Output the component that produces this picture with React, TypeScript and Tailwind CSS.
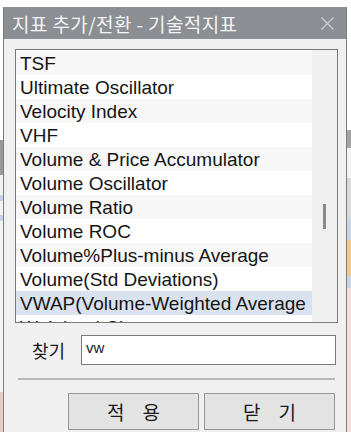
import React from "react";

const items: string[] = [
  "TSF",
  "Ultimate Oscillator",
  "Velocity Index",
  "VHF",
  "Volume & Price Accumulator",
  "Volume Oscillator",
  "Volume Ratio",
  "Volume ROC",
  "Volume%Plus-minus Average",
  "Volume(Std Deviations)",
  "VWAP(Volume-Weighted Average",
  "Weighted Close",
];

const SELECTED = 10;

const latin = { fontFamily: '"Liberation Sans", "Noto Sans CJK KR", sans-serif' };
const hangul = { fontFamily: '"Noto Sans CJK KR", "Liberation Sans", sans-serif' };

const App: React.FC = () => {
  return (
    <div className="flex h-[432px] w-[351px] overflow-hidden bg-white">
      {/* app behind the dialog, left edge */}
      <div className="flex w-[3px] flex-col">
        <div className="h-[140px] bg-white" />
        <div className="h-[35px] bg-[#9a9a9a]" />
        <div className="h-[20px] bg-[#f2f2f2]" />
        <div className="h-[6px] bg-[#c4d3e6]" />
        <div className="h-[14px] bg-[#f2f2f2]" />
        <div className="h-[6px] bg-[#c4d3e6]" />
        <div className="flex-1 bg-[#f4f4f4]" />
        <div className="h-[40px] bg-[#e9c9c9]" />
      </div>

      {/* dialog */}
      <div className="mt-[7px] flex w-[344px] flex-col border-x border-[#7d7d7d] bg-[#f0f0f0]">
        <div className="flex h-[32px] shrink-0 items-center justify-between bg-[#8b8e92] pl-[8px] pr-[12px]">
          <span className="text-[19px] leading-none tracking-[0.4px] text-[#f4f4f4]" style={hangul}>
            지표 추가/전환 - 기술적지표
          </span>
          <svg width="13" height="13" viewBox="0 0 13 13" className="shrink-0">
            <path d="M0.5 0.5 L12.5 12.5 M12.5 0.5 L0.5 12.5" stroke="#cfd0d2" strokeWidth="1.2" fill="none" />
          </svg>
        </div>

        {/* list */}
        <div className="ml-[11px] mt-[10px] flex h-[274px] w-[323px] border border-[#7a7a7a] bg-white">
          <div className="flex-1 overflow-hidden pt-[1px]">
            {items.map((item, i) => (
              <div
                key={item}
                className={
                  "flex h-[24px] items-center whitespace-nowrap pl-[4px] text-[19px] leading-none text-[#151515] " +
                  (i === SELECTED ? "bg-[#d9e2ee]" : i % 2 === 0 ? "bg-[#f7f7f7]" : "bg-white")
                }
                style={latin}
              >
                {item}
              </div>
            ))}
          </div>
          <div className="relative w-[25px] shrink-0 bg-[#f0f0f0]">
            <div className="absolute left-[11px] top-[154px] h-[25px] w-[3px] bg-[#8a8a8a]" />
          </div>
        </div>

        {/* search */}
        <div className="mt-[12px] flex items-center">
          <span className="ml-[28px] w-[49px] text-[18px] leading-none text-[#1a1a1a]" style={hangul}>
            찾기
          </span>
          <div className="flex h-[30px] w-[255px] items-center border border-[#7a7a7a] bg-white pb-[4px] pl-[4px] text-[15px] text-[#222]" style={latin}>
            vw
          </div>
        </div>

        <div className="ml-[14px] mt-[13px] h-[2px] w-[317px] bg-[#b9b9b9]" />

        {/* buttons */}
        <div className="mt-[13px] flex gap-[5px] pl-[64px]">
          <button className="flex h-[37px] w-[131px] items-center justify-center gap-[18px] border border-[#969696] bg-[#e3e3e3] text-[19px] leading-none text-[#1a1a1a]" style={hangul}>
            <span>적</span>
            <span>용</span>
          </button>
          <button className="flex h-[37px] w-[131px] items-center justify-center gap-[18px] border border-[#969696] bg-[#e3e3e3] text-[19px] leading-none text-[#1a1a1a]" style={hangul}>
            <span>닫</span>
            <span>기</span>
          </button>
        </div>
      </div>

      {/* app behind the dialog, right edge */}
      <div className="flex flex-1 flex-col">
        <div className="h-[130px] bg-white" />
        <div className="h-[18px] bg-[#a3a3a3]" />
        <div className="h-[30px] bg-[#f3f3f3]" />
        <div className="h-[40px] bg-[#d9d9d9]" />
        <div className="h-[22px] bg-[#c9d6e6]" />
        <div className="h-[36px] bg-[#efc98e]" />
        <div className="h-[12px] bg-[#c9d6e6]" />
        <div className="flex-1 bg-[#f4dede]" />
      </div>
    </div>
  );
};

export default App;
